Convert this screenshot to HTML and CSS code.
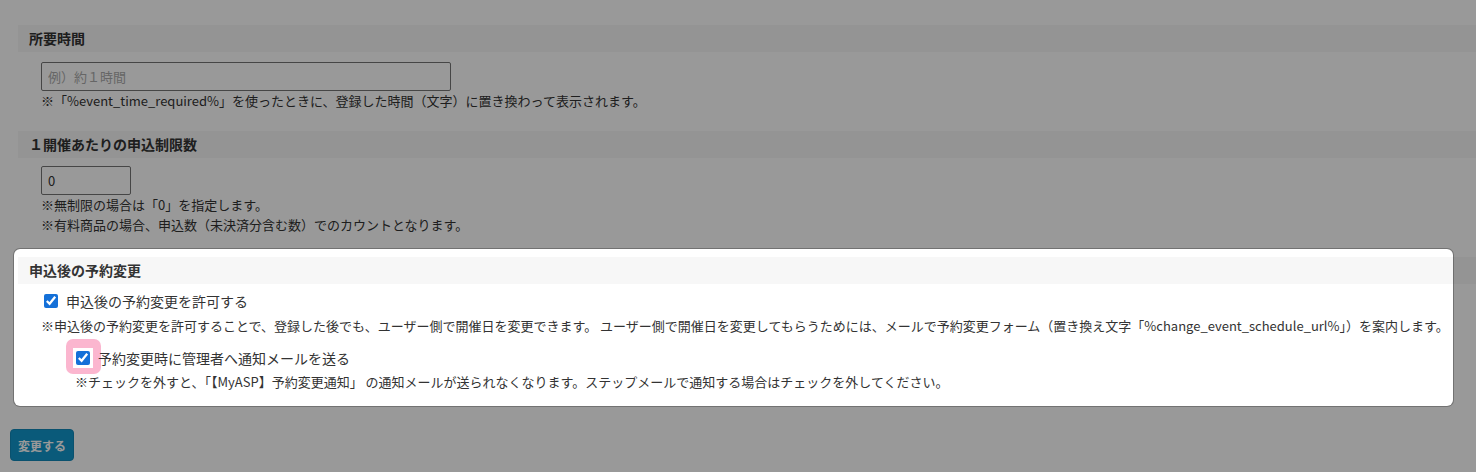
FILE: index.html
```html
<!DOCTYPE html>
<html lang="ja">
<head>
    <meta charset="UTF-8">
    <meta name="viewport" content="width=device-width, initial-scale=1.0">
    <title>イベント設定</title>
    <link rel="stylesheet" href="styles.css">
</head>
<body>
    <p class="cut-line">※イベントの詳細ページに表示される説明文です。改行やリンクを使って、参加者にわかりやすく案内してください。</p>

    <div class="section">
        <div class="section-title">所要時間</div>
        <div class="section-body">
            <input type="text" class="text-field wide" placeholder="例）約１時間">
            <p class="note">※「%event_time_required%」を使ったときに、登録した時間（文字）に置き換わって表示されます。</p>
        </div>
    </div>

    <div class="section">
        <div class="section-title">１開催あたりの申込制限数</div>
        <div class="section-body tight">
            <input type="text" class="text-field short" value="0">
            <p class="note">※無制限の場合は「0」を指定します。</p>
            <p class="note">※有料商品の場合、申込数（未決済分含む数）でのカウントとなります。</p>
        </div>
    </div>

    <div class="section focus">
        <div class="focus-ring"></div>
        <div class="section-title">申込後の予約変更</div>
        <div class="section-body checks">
            <label class="check-row">
                <input type="checkbox" checked>
                <span>申込後の予約変更を許可する</span>
            </label>
            <p class="note">※申込後の予約変更を許可することで、登録した後でも、ユーザー側で開催日を変更できます。 ユーザー側で開催日を変更してもらうためには、メールで予約変更フォーム（置き換え文字「%change_event_schedule_url%」）を案内します。</p>
            <div class="sub-option">
                <label class="check-row">
                    <span class="mark"><input type="checkbox" checked></span>
                    <span>予約変更時に管理者へ通知メールを送る</span>
                </label>
                <p class="note">※チェックを外すと、「【MyASP】予約変更通知」 の通知メールが送られなくなります。ステップメールで通知する場合はチェックを外してください。</p>
            </div>
        </div>
    </div>

    <button class="submit">変更する</button>
</body>
</html>
```

FILE: styles.css
```css
html {
    height: 100%;
}
body {
    margin: 0;
    min-height: 100%;
    font-family: "Noto Sans CJK JP", "Noto Sans", sans-serif;
    color: #333;
    background-color: #ffffff;
    overflow: hidden;
}
.cut-line {
    margin: -18px 0 0 68px;
    font-size: 13px;
    line-height: 17px;
    color: #222;
    white-space: nowrap;
}
.section {
    margin-bottom: 20px;
}
.section-title {
    margin: 26px 0 0 18px;
    padding-left: 11px;
    height: 27px;
    line-height: 27px;
    font-size: 14px;
    font-weight: bold;
    background-color: #f7f7f7;
}
.section + .section .section-title {
    margin-top: 0;
}
.section-body {
    padding: 10px 0 0 41px;
}
.section-body.tight {
    padding-top: 8px;
}
.text-field {
    display: block;
    box-sizing: border-box;
    height: 29px;
    margin: 0;
    padding: 0 6px;
    border: 1px solid #767676;
    border-radius: 2px;
    font-family: inherit;
    font-size: 13px;
    color: #333;
}
.text-field::placeholder {
    color: #aaa;
}
.text-field.wide {
    width: 410px;
}
.text-field.short {
    width: 90px;
}
.note {
    margin: 0;
    font-size: 13px;
    line-height: 20px;
    white-space: nowrap;
}
.section.focus {
    position: relative;
    margin-top: 22px;
}
.focus-ring {
    position: absolute;
    top: -8px;
    left: 14px;
    right: 23px;
    bottom: -14px;
    border-radius: 6px;
    box-shadow: 0 0 0 1px rgba(0, 0, 0, 0.25), 0 0 0 3000px rgba(0, 0, 0, 0.4);
    pointer-events: none;
    z-index: 10;
}
.checks {
    padding-top: 7px;
}
.check-row {
    display: flex;
    align-items: center;
    height: 20px;
    font-size: 14px;
    margin-bottom: 5px;
}
.check-row input {
    width: 14px;
    height: 14px;
    margin: 0 8px 0 3px;
    accent-color: #1470d8;
}
.sub-option {
    padding: 12px 0 0 34px;
}
.sub-option .check-row {
    position: relative;
    z-index: 0;
    margin-bottom: 4px;
}
.mark {
    position: relative;
    display: inline-flex;
    margin: 0 5px 0 -2px;
    padding: 3px;
    background-color: #fff;
}
.mark::before {
    content: "";
    position: absolute;
    top: -9px;
    left: -7px;
    right: -8px;
    bottom: -6px;
    border-radius: 7px;
    background-color: #fbb6cf;
    z-index: -1;
}
.mark input {
    margin: 0;
}
.submit {
    display: block;
    margin: 37px 0 0 10px;
    width: 64px;
    height: 32px;
    padding: 0;
    border: 1px solid #1287b8;
    border-radius: 4px;
    background-color: #1196cb;
    color: #ffffff;
    font-family: inherit;
    font-size: 12px;
    font-weight: bold;
}
```
